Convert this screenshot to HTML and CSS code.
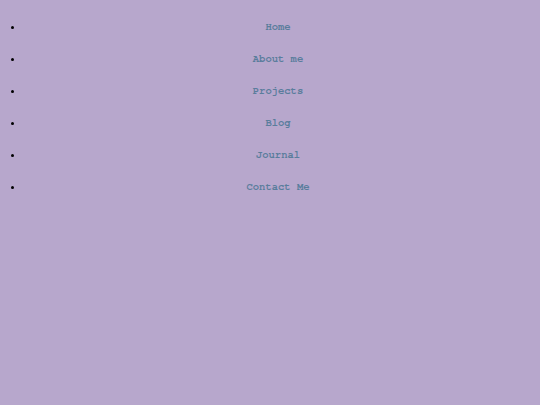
FILE: index.html
```html
<!DOCTYPE html>
<html>
<head>
<meta charset="utf-8">
<link rel="stylesheet" href="styles.css">
</head>
<body>
<ul class="nav">
  <li class="nav-item"><a class="nav-link" href="#">Home</a></li>
  <li class="nav-item"><a class="nav-link" href="#">About me</a></li>
  <li class="nav-item"><a class="nav-link" href="#">Projects</a></li>
  <li class="nav-item"><a class="nav-link" href="#">Blog</a></li>
  <li class="nav-item"><a class="nav-link" href="#">Journal</a></li>
  <li class="nav-item"><a class="nav-link" href="#">Contact Me</a></li>
</ul>
</body>
</html>
```
FILE: styles.css
```css
html, body {
  margin: 0;
  background: #b7a7cc;
}
body {
  font-family: "Nimbus Mono PS", "Nimbus Mono L", FreeMono, "Courier 10 Pitch", "DejaVu Sans Mono", monospace;
  font-size: 10.5px;
}
.nav {
  margin: 0;
  padding: 11px 8px 0 24px;
  color: #000;
}
.nav-item {
  height: 32px;
  line-height: 32px;
  text-align: center;
}
.nav-item::marker {
  font-size: 13px;
}
.nav-link {
  font-weight: bold;
  color: #5a7d9c;
  text-decoration: none;
}
```
